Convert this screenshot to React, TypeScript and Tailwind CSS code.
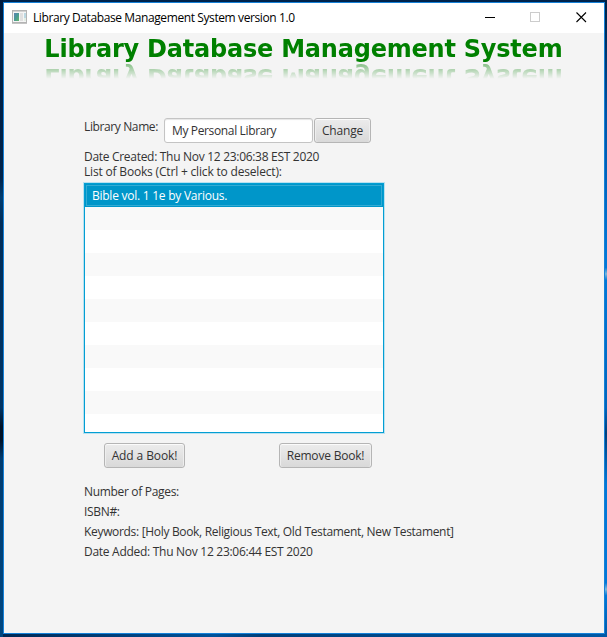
import type { ReactNode } from "react";

const rows = ["Bible vol. 1 1e by Various.", "", "", "", "", "", "", "", "", "", ""];

function Button({ children, className }: { children: ReactNode; className: string }) {
  return (
    <button
      className={`h-[25px] shrink-0 whitespace-nowrap rounded-[3px] border border-[#b5b5b5] bg-gradient-to-b from-[#ececec] to-[#d9d9d9] text-center leading-[23px] shadow-[inset_0_1px_0_#fbfbfb,inset_1px_0_0_#eeeeee,inset_-1px_0_0_#eeeeee] ${className}`}
    >
      {children}
    </button>
  );
}

function TitleBar() {
  return (
    <header className="flex h-[30px] items-center bg-white text-black">
      <svg className="ml-2 mt-[-2px] shrink-0" width="15" height="14" viewBox="0 0 15 14" shapeRendering="crispEdges">
        <defs>
          <linearGradient id="pane" x1="0" y1="0" x2="1" y2="1">
            <stop offset="0" stopColor="#5b83b4" />
            <stop offset="0.5" stopColor="#4a9a94" />
            <stop offset="1" stopColor="#63b56a" />
          </linearGradient>
        </defs>
        <rect width="15" height="14" fill="#b4b4b4" />
        <rect x="1" y="1" width="13" height="1" fill="#d2d2d2" />
        <rect x="1" y="2" width="13" height="10" fill="#f5f5f5" />
        <rect x="2" y="3" width="5" height="8" fill="url(#pane)" />
        <rect x="8" y="3" width="3" height="8" fill="#e0e0e0" />
        <rect x="12" y="3" width="2" height="5" fill="#bcd8e2" />
        <rect x="12" y="8" width="2" height="3" fill="#e3eee5" />
        <rect y="13" width="15" height="1" fill="#c5c5c5" />
      </svg>
      <span className="ml-[6px] w-[290px] whitespace-nowrap text-[12px] leading-[30px] tracking-[-0.4px]">
        Library Database Management System version 1.0
      </span>
      <svg className="ml-auto mr-[17px]" width="102" height="30" viewBox="0 0 102 30" fill="none" shapeRendering="crispEdges">
        <path d="M0 14.5h10" stroke="#000" />
        <rect x="45.5" y="9.5" width="9" height="9" stroke="#ccc" />
        <path d="M91.5 9.5l9.5 9.5M101 9.5l-9.5 9.5" stroke="#000" strokeWidth="1.1" shapeRendering="auto" />
      </svg>
    </header>
  );
}

function Heading() {
  return (
    <div className="flex h-[60px] origin-left scale-x-[0.96] flex-col whitespace-nowrap pl-[42px] pt-px font-['DejaVu_Sans',sans-serif] text-[25px] font-bold leading-[30px] tracking-[-0.23px] text-[#008000]">
      <h1 className="h-[28px]">Library Database Management System</h1>
      <div
        aria-hidden="true"
        className="h-[30px] -scale-y-100 opacity-50 [mask-image:linear-gradient(to_top,black_0%,transparent_56%)]"
      >
        Library Database Management System
      </div>
    </div>
  );
}

export default function App() {
  return (
    <div className="h-[637px] w-[607px] overflow-hidden bg-[linear-gradient(to_bottom,#001b3e_0%,#00234b_28%,#003c70_31%,#002c58_35%,#003465_64%,#001126_67%,#001126_69%,#003b70_72%,#004680_100%)] pl-[3px] font-['Open_Sans','Noto_Sans',sans-serif] text-[12px] text-[#333333]">
      <div className="h-full bg-[linear-gradient(to_bottom,#001f42_0%,#002e5f_6%,#0053a5_18%,#0078d7_40%,#0078d7_42%,#7db8dc_43%,#0078d7_44%,#0065bb_64%,#003f7b_68%,#0078d7_76%,#0078d7_91.5%,#7db8dc_92.5%,#0078d7_93.5%,#0058a5_100%)]">
        <div className="h-full w-[602px] bg-[linear-gradient(to_right,#002854_0%,#00529a_35%,#003e78_43%,#0058a5_100%)]">
          <div className="h-[2px] bg-[#00234b]" />
          <main className="flex h-[632px] w-[602px] flex-col border border-[#1581d8] bg-[#f4f4f4]">
            <TitleBar />
            <Heading />
            <div className="ml-20 mt-[25px] flex h-[25px]">
              <label className="w-20 whitespace-nowrap leading-[18px] tracking-[-0.38px]">Library Name:</label>
              <input
                className="h-[25px] w-[149px] rounded-[3px] border border-[#c4c4c4] bg-white px-[7px] tracking-[-0.36px] shadow-[inset_0_1px_1px_#e6e6e6] outline-none"
                defaultValue="My Personal Library"
              />
              <Button className="ml-px w-[57px] tracking-[-0.2px]">Change</Button>
            </div>
            <p className="ml-20 mt-[6px] h-[15px] whitespace-nowrap leading-[15px] tracking-[-0.3px]">
              Date Created: Thu Nov 12 23:06:38 EST 2020
            </p>
            <p className="ml-20 h-[19px] whitespace-nowrap leading-[15px] tracking-[-0.18px]">
              List of Books (Ctrl + click to deselect):
            </p>
            <ul className="ml-20 h-[250px] w-[300px] shrink-0 overflow-hidden border border-[#039ed3] shadow-[0_0_0_1px_#b8e1f0]">
              {rows.map((row, i) => (
                <li
                  key={i}
                  className={
                    i === 0
                      ? "h-[23px] bg-[#0096c9] p-px text-white"
                      : i % 2
                        ? "h-[23px] bg-[#f9f9f9]"
                        : "h-[23px] bg-white"
                  }
                >
                  {row && (
                    <div className="h-[21px] whitespace-nowrap border border-[#33abd4] pl-[5px] leading-[20px] tracking-[-0.25px]">
                      {row}
                    </div>
                  )}
                </li>
              ))}
            </ul>
            <div className="ml-[100px] mt-[10px] flex gap-[94px]">
              <Button className="w-[81px] tracking-[-0.1px]">Add a Book!</Button>
              <Button className="w-[93px] tracking-[-0.2px]">Remove Book!</Button>
            </div>
            <div className="ml-20 mt-[14px] whitespace-nowrap leading-5 tracking-[-0.32px]">
              <p>Number of Pages:</p>
              <p>ISBN#:</p>
              <p>Keywords: [Holy Book, Religious Text, Old Testament, New Testament]</p>
              <p className="tracking-[-0.28px]">Date Added: Thu Nov 12 23:06:44 EST 2020</p>
            </div>
          </main>
        </div>
      </div>
    </div>
  );
}
